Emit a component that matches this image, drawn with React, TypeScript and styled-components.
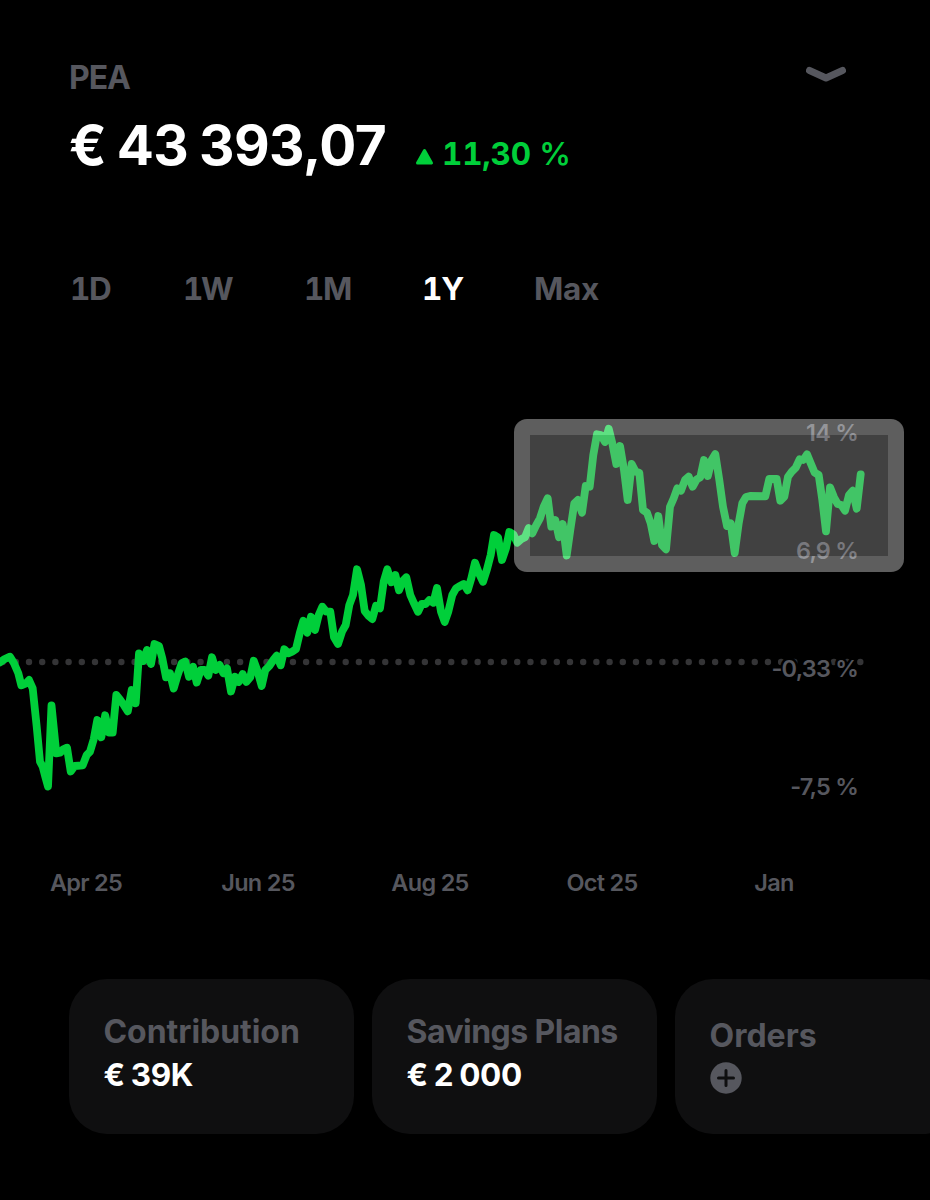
import React from "react";
import styled, { createGlobalStyle } from "styled-components";

const GlobalStyle = createGlobalStyle`
  * { box-sizing: border-box; }
  body {
    margin: 0;
    background: #000;
    font-family: Inter, "Liberation Sans", sans-serif;
  }
`;

const GREY = "#56575e";
const GREEN = "#00cf3a";

const Screen = styled.main`
  width: 930px;
  height: 1200px;
  overflow: hidden;
  background: #000;
  display: flex;
  flex-direction: column;
`;

const Header = styled.header`
  height: 269px;
  padding: 58px 84px 0 69px;
  display: flex;
  justify-content: space-between;
  align-items: flex-start;
`;

const AccountName = styled.div`
  font-size: 32px;
  line-height: 40px;
  font-weight: 700;
  letter-spacing: -1.1px;
  color: ${GREY};
`;

const BalanceRow = styled.div`
  display: flex;
  align-items: baseline;
  margin-top: 12px;
  white-space: nowrap;
`;

const Balance = styled.h1`
  margin: 0;
  width: 346px;
  font-size: 55px;
  line-height: 70px;
  font-weight: 700;
  letter-spacing: -0.5px;
  word-spacing: -2px;
  color: #fff;
`;

const Change = styled.div`
  display: flex;
  align-items: baseline;
  gap: 8px;
  font-size: 31.5px;
  font-weight: 700;
  font-variant-numeric: tabular-nums;
  letter-spacing: -0.2px;
  color: ${GREEN};
`;

const Percent = styled.span`
  font-weight: 600;
  letter-spacing: -1px;
`;

const ChevronButton = styled.button`
  border: 0;
  padding: 0;
  margin-top: 8px;
  background: none;
  line-height: 0;
`;

const Periods = styled.nav`
  height: 131px;
  padding-left: 70px;
  display: flex;
  align-items: flex-start;
`;

const Period = styled.button<{ $width: number; $spacing: number; $active?: boolean }>`
  width: ${(p) => p.$width}px;
  padding: 0;
  border: 0;
  background: none;
  text-align: left;
  font-family: inherit;
  font-size: 31.5px;
  line-height: 40px;
  font-weight: 700;
  font-variant-numeric: tabular-nums;
  letter-spacing: ${(p) => p.$spacing}px;
  color: ${(p) => (p.$active ? "#fff" : GREY)};
`;

const Chart = styled.section`
  position: relative;
  height: 440px;
`;

const Plot = styled.svg`
  display: block;
`;

const ValueAxis = styled.div`
  position: absolute;
  top: 18px;
  right: 72px;
  display: flex;
  flex-direction: column;
  align-items: flex-end;
  gap: 88px;
`;

const ValueLabel = styled.span`
  font-size: 23.5px;
  line-height: 30px;
  font-weight: 600;
  letter-spacing: -0.8px;
  color: ${GREY};
  -webkit-text-stroke: 5px #000;
  paint-order: stroke fill;
`;

const Highlight = styled.div`
  position: absolute;
  left: 514px;
  top: 19px;
  width: 390px;
  height: 152.5px;
  border: 16.5px solid rgba(255, 255, 255, 0.37);
  border-radius: 13px;
  background: rgba(180, 180, 180, 0.362);
  background-clip: padding-box;
`;

const TimeAxis = styled.div`
  height: 139px;
  padding-top: 28px;
  display: grid;
  grid-template-columns: repeat(5, 172px);
  text-align: center;
`;

const TimeLabel = styled.span`
  font-size: 23.5px;
  line-height: 30px;
  font-weight: 600;
  letter-spacing: -0.7px;
  color: ${GREY};
`;

const Cards = styled.section`
  padding-left: 69px;
  display: flex;
  gap: 18px;
`;

const Card = styled.article<{ $top?: number }>`
  flex: 0 0 285px;
  height: 155px;
  padding: ${(p) => p.$top ?? 32.5}px 0 0 34.5px;
  border-radius: 38px;
  background: #0f0f10;
`;

const CardTitle = styled.div<{ $spacing?: number }>`
  font-size: 32px;
  line-height: 40px;
  font-weight: 700;
  letter-spacing: ${(p) => p.$spacing ?? 0}px;
  white-space: nowrap;
  color: ${GREY};
`;

const CardValue = styled.div`
  margin-top: 3px;
  font-size: 31.5px;
  line-height: 40px;
  font-weight: 700;
  letter-spacing: -0.4px;
  word-spacing: -1px;
  color: #fff;
`;

const AddIcon = styled.svg`
  display: block;
  margin-top: 6px;
`;

const series = [
  "0,662.3 4.7,659 10,656.7 14,663.3 18.3,673.3 21.3,685.3 26,683.3 29,680 32.7,688.3 36.7,726.7 40,761.7 42.7,766.7 45.3,776.7 48,786.5",
  "51.5,705.3 56.3,753.3 60,752.7 63.3,749.3 67,747.7 70.7,771.5 74.7,766 82.7,765.3 86.7,755 90,751.7 93.7,739.3 97.3,720 101.3,737.3 105.2,715.3",
  "109,732.7 112.7,732.7 116.3,695 120.3,700 124,705.3 127.8,711.3 131.7,690 135.7,703.3 139,653.5 143.3,661 147,650 151,664 154.5,644 159,646 162.3,658.3 166,677.3 170,673.3 173.7,688.5 177.7,675",
  "181.7,663.3 185.2,661.5 189,676.7 193,666.7 196.7,682.5 200.7,670 204.7,670 208.3,675.7 212,657.3 215.7,670 219.7,665 223.3,673.3 227,668.3 231,691.5 235,676.7 238.7,682 242.7,674 246.3,682 250.3,677.3 253.7,660.7 257.7,671.7 261.7,686 265.3,670 269.3,666 273.3,660 276.7,655.7 280.7,665.3 284.3,649.3 288.3,653.3 292.3,651.7 296,649",
  "299.7,633.3 303.3,620.7 307.3,632.7 311,616.7 315,630 318.7,615 322.3,606.7 326.3,611.7 330.3,611.7 334,637.3 338,644 342,631.7 345.7,625 349.3,605 353,595 357,569.3 361,585 364.7,611 368.7,616 372.3,619 376,605.7 380,608.3 383.7,581.7 387.3,569.3 391.3,582.3 395.3,575 399,590.3 402.7,581 406.3,577.3",
  "410.3,595 414,603.3 418,611.7 421.7,604 425.7,604 429.3,600 433.3,602.7 437,588 441,611.7 444.7,622 448.3,611.7 452.3,595 456,588.3 460,586 463.7,584 467.7,590.3 471.3,578.3 475,562.7 479,573.3 483,581.7 487,569.3 490.7,555 494,535 498,537.3 502,560 506,548.3 509.3,532 513.3,534.3",
  "517.3,542.7 521,539.3 525,537.3 528.7,528 532.3,533.3 536.3,525 540,518.3 543.7,506.7 547.7,498.3 551.3,526.7 555.3,520 559,537.3 562.7,524 566.7,555.5 570.3,530 574.3,503.3 578,500 582,512.7 585.7,486 589.7,486.7 593.3,455 597,434.3 601,435 605,442 608.7,428.8",
  "612.3,443.3 616.3,464 620,446 624,470 627.7,500 631.7,464 635.7,471.7 639.3,472.7 643,510 647,512.7 650.7,523.3 654.3,541 658.3,516 662,545 666,549.3 670,506.7 673.7,498.3 677.3,488.3 681,490.7 685,480 688.7,476.7 692.7,486.7 696.7,479.3 700.3,477.3 704,460 707.8,476 711.7,460 715.3,454",
  "719.3,480 723,506.7 727,526 730.7,523.3 734.7,553 738.7,523.3 742.3,503.3 746,497 750,496 765.3,496.3 769.3,479 776.7,479 780.3,500.7 784.3,496.7 788,476.7 791.7,471.7 795.7,467.7 799.7,459.3 803.3,460 807,454.3 810.7,463.3 814.7,472.7 818.7,475 822.3,500 826,531.3 830,487.3 834,497.3 837.7,504 841.3,505 845,510.7 849,495 852.7,490.7 856.7,508.7 860.7,474.3",
].join(" ");

const periods = [
  { label: "1D", width: 113, spacing: -1.4 },
  { label: "1W", width: 121, spacing: -2.4 },
  { label: "1M", width: 118, spacing: -1.4 },
  { label: "1Y", width: 112, spacing: -1.2, active: true },
  { label: "Max", width: 80, spacing: -0.3 },
];

const values = ["14 %", "6,9 %", "-0,33 %", "-7,5 %"];

const months = ["Apr 25", "Jun 25", "Aug 25", "Oct 25", "Jan"];

const dots = Array.from({ length: 66 }, (_, i) => 860.3 - i * 13.195);

export default function App() {
  return (
    <Screen>
      <GlobalStyle />
      <Header>
        <div>
          <AccountName>PEA</AccountName>
          <BalanceRow>
            <Balance>€ 43 393,07</Balance>
            <Change>
              <svg width="19" height="17" viewBox="0 0 19 17" aria-hidden="true">
                <path
                  d="M9.5 2.5 L16.5 15 H2.5 Z"
                  fill={GREEN}
                  stroke={GREEN}
                  strokeWidth="3"
                  strokeLinejoin="round"
                />
              </svg>
              <span>
                11,30 <Percent>%</Percent>
              </span>
            </Change>
          </BalanceRow>
        </div>
        <ChevronButton aria-label="Switch account">
          <svg width="40" height="16" viewBox="0 0 40 16">
            <path
              d="M3.5 4.5 L20 12 L36.5 4.5"
              fill="none"
              stroke={GREY}
              strokeWidth="7"
              strokeLinecap="round"
              strokeLinejoin="round"
            />
          </svg>
        </ChevronButton>
      </Header>

      <Periods>
        {periods.map((p) => (
          <Period key={p.label} $width={p.width} $spacing={p.spacing} $active={p.active}>
            {p.label}
          </Period>
        ))}
      </Periods>

      <Chart>
        <Plot width="930" height="440" viewBox="0 400 930 440">
          {dots.map((x) => (
            <circle key={x} cx={x} cy="662" r="3.2" fill="#343436" />
          ))}
          <polyline
            points={series}
            fill="none"
            stroke={GREEN}
            strokeWidth="7.8"
            strokeLinecap="round"
            strokeLinejoin="round"
          />
        </Plot>
        <ValueAxis>
          {values.map((v) => (
            <ValueLabel key={v}>{v}</ValueLabel>
          ))}
        </ValueAxis>
        <Highlight />
      </Chart>

      <TimeAxis>
        {months.map((m) => (
          <TimeLabel key={m}>{m}</TimeLabel>
        ))}
      </TimeAxis>

      <Cards>
        <Card>
          <CardTitle $spacing={-0.05}>Contribution</CardTitle>
          <CardValue>€ 39K</CardValue>
        </Card>
        <Card>
          <CardTitle $spacing={-0.55}>Savings Plans</CardTitle>
          <CardValue>€ 2 000</CardValue>
        </Card>
        <Card $top={36.5}>
          <CardTitle>Orders</CardTitle>
          <AddIcon width="32" height="32" viewBox="0 0 32 32">
            <circle cx="16" cy="16" r="15.7" fill={GREY} />
            <path d="M16 8.5 V23.5 M8.5 16 H23.5" stroke="#0f0f10" strokeWidth="3" strokeLinecap="round" />
          </AddIcon>
        </Card>
      </Cards>
    </Screen>
  );
}
